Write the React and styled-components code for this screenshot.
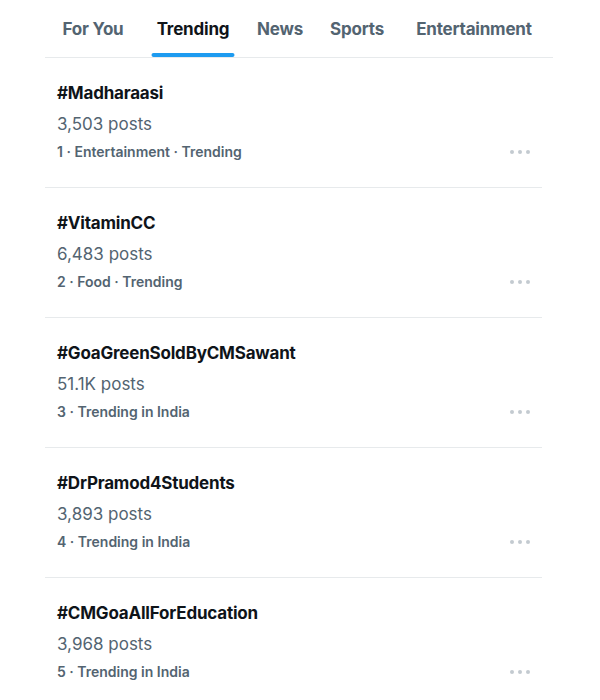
import React from 'react'
import styled, { createGlobalStyle } from 'styled-components'

const trends = [
  { tag: '#Madharaasi', posts: '3,503 posts', meta: '1 · Entertainment · Trending' },
  { tag: '#VitaminCC', posts: '6,483 posts', meta: '2 · Food · Trending' },
  { tag: '#GoaGreenSoldByCMSawant', posts: '51.1K posts', meta: '3 · Trending in India' },
  { tag: '#DrPramod4Students', posts: '3,893 posts', meta: '4 · Trending in India' },
  { tag: '#CMGoaAllForEducation', posts: '3,968 posts', meta: '5 · Trending in India' },
]

const tabs = [
  { label: 'For You', width: 96 },
  { label: 'Trending', width: 104, active: true },
  { label: 'News', width: 70 },
  { label: 'Sports', width: 84 },
  { label: 'Entertainment', width: 150 },
]

const Global = createGlobalStyle`
  body {
    margin: 0;
    background: #fff;
    font-family: Inter, "Noto Sans", sans-serif;
    -webkit-font-smoothing: antialiased;
  }
`

const Page = styled.div`
  width: 600px;
  height: 700px;
  overflow: hidden;
  background: #fff;
`

const TabBar = styled.nav`
  display: flex;
  margin-left: 45px;
  width: 508px;
  height: 57px;
  border-bottom: 1px solid #e7eaec;
`

const Tab = styled.div`
  position: relative;
  width: ${p => p.$w}px;
  display: flex;
  justify-content: center;
  padding-top: 19px;
  font-size: 17px;
  font-weight: 700;
  letter-spacing: -0.2px;
  color: ${p => (p.$active ? '#0f1419' : '#536471')};
`

const Underline = styled.span`
  position: absolute;
  bottom: 0;
  left: 50%;
  transform: translateX(-50%);
  width: 83px;
  height: 4px;
  border-radius: 2px;
  background: #1d9bf0;
`

const List = styled.div`
  width: 497px;
  margin-left: 45px;
`

const Item = styled.div`
  display: flex;
  align-items: flex-end;
  justify-content: space-between;
  padding: 23px 12px 25px;
  border-bottom: 1px solid #e7eaec;
`

const Info = styled.div`
  display: flex;
  flex-direction: column;
`

const Tag = styled.div`
  font-size: 17px;
  line-height: 24px;
  font-weight: 700;
  letter-spacing: -0.2px;
  color: #0f1419;
`

const Posts = styled.div`
  margin-top: 7px;
  font-size: 17px;
  line-height: 24px;
  color: #536471;
`

const Meta = styled.div`
  margin-top: 6px;
  font-size: 14px;
  line-height: 20px;
  font-weight: 600;
  color: #536471;
`

const Dots = styled.div`
  display: flex;
  gap: 4px;
  margin-bottom: 8px;
  span {
    width: 4px;
    height: 4px;
    border-radius: 50%;
    background: #c3cad0;
  }
`

export default function App() {
  return (
    <Page>
      <Global />
      <TabBar>
        {tabs.map(t => (
          <Tab key={t.label} $w={t.width} $active={t.active}>
            {t.label}
            {t.active && <Underline />}
          </Tab>
        ))}
      </TabBar>
      <List>
        {trends.map(t => (
          <Item key={t.tag}>
            <Info>
              <Tag>{t.tag}</Tag>
              <Posts>{t.posts}</Posts>
              <Meta>{t.meta}</Meta>
            </Info>
            <Dots><span /><span /><span /></Dots>
          </Item>
        ))}
      </List>
    </Page>
  )
}
